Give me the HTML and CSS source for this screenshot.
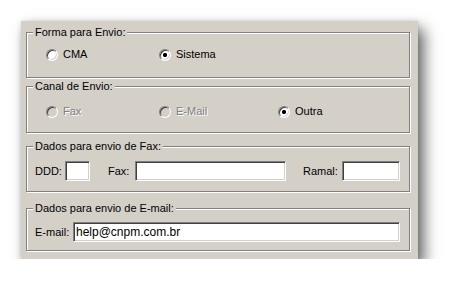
FILE: index.html
```html
<!DOCTYPE html>
<html lang="pt-BR">
<head>
    <meta charset="UTF-8">
    <title>Envio</title>
    <link rel="stylesheet" href="styles.css">
</head>
<body>
    <div class="panel">
        <fieldset class="group g-forma">
            <legend>Forma para Envio:</legend>
            <div class="options">
                <label class="opt"><input type="radio" name="forma"><span>CMA</span></label>
                <label class="opt"><input type="radio" name="forma" checked><span>Sistema</span></label>
            </div>
        </fieldset>

        <fieldset class="group g-canal">
            <legend>Canal de Envio:</legend>
            <div class="options">
                <label class="opt disabled"><input type="radio" name="canal" disabled><span>Fax</span></label>
                <label class="opt disabled"><input type="radio" name="canal" disabled><span>E-Mail</span></label>
                <label class="opt"><input type="radio" name="canal" checked><span>Outra</span></label>
            </div>
        </fieldset>

        <fieldset class="group g-fax">
            <legend>Dados para envio de Fax:</legend>
            <div class="fields">
                <label for="ddd" class="lbl lbl-ddd">DDD:</label>
                <input type="text" id="ddd" class="box box-ddd">
                <label for="fax" class="lbl lbl-fax">Fax:</label>
                <input type="text" id="fax" class="box box-fax">
                <label for="ramal" class="lbl lbl-ramal">Ramal:</label>
                <input type="text" id="ramal" class="box box-ramal">
            </div>
        </fieldset>

        <fieldset class="group g-email">
            <legend>Dados para envio de E-mail:</legend>
            <div class="fields">
                <label for="email" class="lbl lbl-email">E-mail:</label>
                <input type="text" id="email" class="box box-email" value="help@cnpm.com.br">
            </div>
        </fieldset>
    </div>
</body>
</html>
```

FILE: styles.css
```css
body {
    margin: 0;
    background: #fff;
    font-family: "Liberation Sans", Arial, sans-serif;
    font-size: 11px;
    color: #000;
}
.panel {
    margin: 21px 0 0 21px;
    width: 384px;
    padding: 5px 8px 8px 5px;
    background: #d4d0c8;
    box-shadow: 6px 8px 14px rgba(0, 0, 0, 0.6), 0 0 5px rgba(0, 0, 0, 0.12);
}
.group {
    margin: 0;
    padding: 0;
    min-width: 0;
    border: 1px solid #808080;
    box-shadow: inset 1px 1px #fff, 1px 1px #fff;
}
.group legend {
    margin-left: 6px;
    padding: 0 2px;
    line-height: 13px;
    background: #d4d0c8;
}
.g-forma .options {
    padding: 9px 0 16px 19px;
}
.g-canal {
    margin-top: 2px;
}
.g-canal .options {
    padding: 12px 0 14px 19px;
}
.g-fax {
    margin-top: 7px;
}
.g-fax .fields {
    padding: 8px 0 10px 8px;
}
.g-email {
    margin-top: 10px;
}
.g-email .fields {
    padding: 7px 0 8px 8px;
}
.options {
    display: grid;
    grid-template-columns: 113px 119px auto;
    line-height: 13px;
}
.opt {
    display: flex;
    align-items: center;
    gap: 5px;
}
.opt input {
    appearance: none;
    margin: 0;
    width: 12px;
    height: 12px;
    border-radius: 50%;
    border: 1px solid;
    border-color: #808080 #fff #fff #808080;
    background: #fff;
    box-shadow: inset 1px 1px #404040, inset -1px -1px #d4d0c8;
}
.opt input:checked {
    background: radial-gradient(circle, #000 0, #000 1.8px, #fff 2.4px);
}
.opt input:disabled {
    background: #d4d0c8;
}
.opt.disabled span {
    color: #808080;
    text-shadow: 1px 1px #fff;
}
.fields {
    display: flex;
    align-items: center;
}
.lbl {
    line-height: 13px;
}
.box {
    box-sizing: border-box;
    margin: 0;
    height: 20px;
    padding: 0 2px;
    border: 1px solid;
    border-color: #808080 #fff #fff #808080;
    box-shadow: inset 1px 1px #404040, inset -1px -1px #d4d0c8;
    background: #fff;
    font-family: "Liberation Sans", Arial, sans-serif;
    font-size: 12px;
    color: #000;
    outline: none;
}
.lbl-ddd { width: 30px; }
.box-ddd { width: 25px; }
.lbl-fax { width: 27px; margin-left: 18px; }
.box-fax { width: 151px; }
.lbl-ramal { width: 39px; margin-left: 17px; }
.box-ramal { width: 58px; }
.lbl-email { width: 38px; }
.box-email { width: 327px; }
```
